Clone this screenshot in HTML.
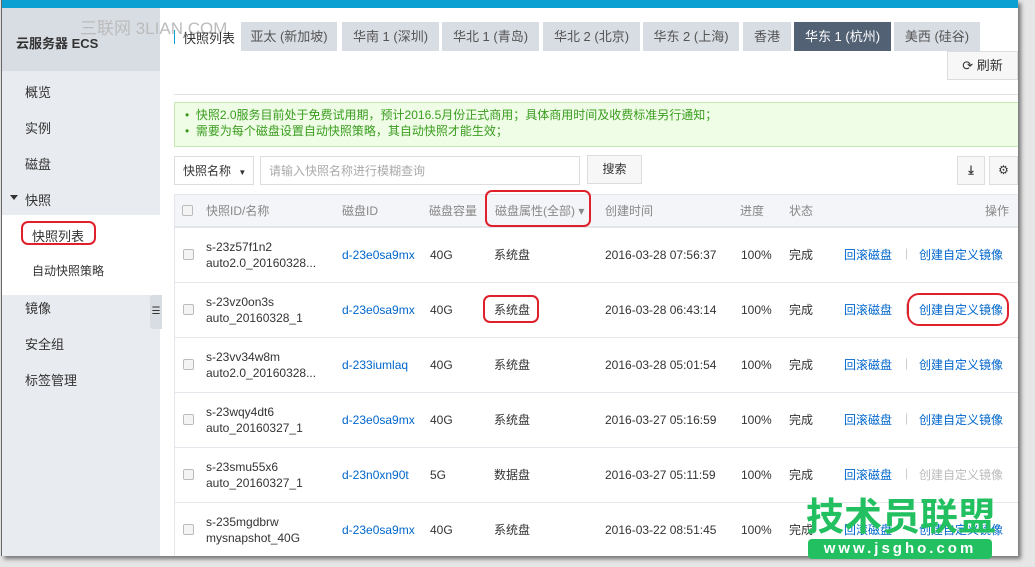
<!DOCTYPE html>
<html><head><meta charset="utf-8"><style>
*{margin:0;padding:0;box-sizing:border-box}
body{width:1035px;height:567px;overflow:hidden;background:#e6e6e6;font-family:"Liberation Sans","Noto Sans CJK SC",sans-serif;font-size:12px;color:#333;position:relative}
.frame{position:absolute;left:1px;top:0;width:1017px;height:556px;background:#fff;overflow:hidden;box-shadow:3px 3px 4px #777;border-left:1px solid #666}
.top{position:absolute;left:0;top:0;width:100%;height:8px;background:#0aa0d2}
.side{position:absolute;left:0;top:8px;width:158px;height:560px;background:#e8ebef}
.sh{height:63px;background:#d8dce3;font-weight:bold;font-size:13px;padding:25px 0 0 14px;color:#333}
.mi{position:absolute;left:23px;font-size:13px}
.abs{position:absolute}
.tab{position:absolute;top:22px;height:29px;background:#d8dce3;color:#555;font-size:13px;text-align:center;line-height:29px}
.red{position:absolute;border:2px solid #e0202a;border-radius:7px}
.th{position:absolute;top:203px;color:#888;font-size:12px;line-height:16px}
.r{position:absolute;left:172px;width:845px;height:55px;border-top:1px solid #e3e6ea}
.r span{position:absolute;top:0;line-height:16px;white-space:nowrap}
.blue{color:#06c}
.cb{position:absolute;width:11px;height:11px;border:1px solid #bbb;border-radius:2px;background:#f4f4f4}
</style></head><body>
<div class="frame">
<div class="top"></div>
<div class="side">
<div class="sh">云服务器 ECS</div>
<div class="mi" style="top:74px">概览</div>
<div class="mi" style="top:110px">实例</div>
<div class="mi" style="top:146px">磁盘</div>
<div class="mi" style="top:182px">快照</div>
<div class="abs" style="left:8px;top:187px;border:4px solid transparent;border-top:5px solid #333;border-bottom:0"></div>
<div class="abs" style="left:0;top:207px;width:158px;height:80px;background:#fff"></div>
<div class="mi" style="top:218px;left:30px">快照列表</div>
<div class="mi" style="top:254px;left:30px;font-size:12px">自动快照策略</div>
<div class="mi" style="top:290px">镜像</div>
<div class="mi" style="top:326px">安全组</div>
<div class="mi" style="top:362px">标签管理</div>
</div>
<div class="red" style="left:19px;top:221px;width:75px;height:24px"></div>
<div class="abs" style="left:148px;top:295px;width:12px;height:34px;background:#d8dce3;border-radius:3px 0 0 3px;font-size:10px;line-height:34px;text-align:center">☰</div>
<div class="abs" style="left:78px;top:14px;font-size:17px;color:#bbb">三联网 3LIAN.COM</div>
<div class="abs" style="left:172px;top:30px;width:1px;height:14px;background:#0aa0d2"></div>
<div class="abs" style="left:181px;top:28px;font-size:13px">快照列表</div>
<div class="tab" style="left:239px;width:96px">亚太 (新加坡)</div>
<div class="tab" style="left:340px;width:97px">华南 1 (深圳)</div>
<div class="tab" style="left:440px;width:97px">华北 1 (青岛)</div>
<div class="tab" style="left:541px;width:97px">华北 2 (北京)</div>
<div class="tab" style="left:641px;width:96px">华东 2 (上海)</div>
<div class="tab" style="left:741px;width:48px">香港</div>
<div class="tab" style="left:792px;width:97px;background:#536175;color:#fff">华东 1 (杭州)</div>
<div class="tab" style="left:892px;width:86px">美西 (硅谷)</div>
<div class="abs" style="left:945px;top:51px;width:71px;height:29px;border:1px solid #ddd;background:#f7f7f7;font-size:13px;line-height:27px;text-align:center">⟳ 刷新</div>
<div class="abs" style="left:172px;top:94px;width:845px;height:1px;background:#e3e3e3"></div>
<div class="abs" style="left:172px;top:102px;width:845px;height:45px;background:#effde6;border:1px solid #c7e7b4;color:#3a9c1f;font-size:12px;padding:4px 0 0 10px;line-height:16px">• &nbsp;快照2.0服务目前处于免费试用期，预计2016.5月份正式商用；具体商用时间及收费标准另行通知；<br>• &nbsp;需要为每个磁盘设置自动快照策略，其自动快照才能生效；</div>
<div class="abs" style="left:172px;top:156px;width:80px;height:29px;border:1px solid #ddd;padding:6px 8px;font-size:12px;white-space:nowrap;line-height:16px">快照名称 <span style="font-size:8px;margin-left:4px">▼</span></div>
<div class="abs" style="left:258px;top:156px;width:320px;height:29px;border:1px solid #ddd;padding:6px 8px;color:#aaa;line-height:16px">请输入快照名称进行模糊查询</div>
<div class="abs" style="left:585px;top:155px;width:55px;height:29px;border:1px solid #ddd;background:#f7f7f7;line-height:27px;text-align:center">搜索</div>
<div class="abs" style="left:955px;top:156px;width:28px;height:29px;border:1px solid #ddd;background:#f7f7f7;text-align:center;line-height:27px;font-weight:bold">⤓</div>
<div class="abs" style="left:987px;top:156px;width:29px;height:29px;border:1px solid #ddd;background:#f7f7f7;text-align:center;line-height:27px">⚙</div>
<div class="abs" style="left:172px;top:194px;width:845px;height:33px;background:#f4f5f8;border:1px solid #e3e6ea"></div>
<div class="cb" style="left:180px;top:205px"></div>
<div class="th" style="left:204px">快照ID/名称</div>
<div class="th" style="left:340px">磁盘ID</div>
<div class="th" style="left:427px">磁盘容量</div>
<div class="th" style="left:493px">磁盘属性(全部) ▾</div>
<div class="th" style="left:603px">创建时间</div>
<div class="th" style="left:738px">进度</div>
<div class="th" style="left:787px">状态</div>
<div class="th" style="left:983px">操作</div>
<div class="red" style="left:483px;top:190px;width:106px;height:37px"></div>
<div class="abs" style="left:172px;top:227px;width:845px;height:340px;border-left:1px solid #e3e6ea;border-right:1px solid #e3e6ea"></div>

<div class="r" style="top:227px"><div class="cb" style="left:9px;top:21px"></div><span style="left:32px;top:11px">s-23z57f1n2<br>auto2.0_20160328...</span><span class="blue" style="left:168px;top:19px">d-23e0sa9mx</span><span style="left:256px;top:19px">40G</span><span style="left:320px;top:19px">系统盘</span><span style="left:431px;top:19px">2016-03-28 07:56:37</span><span style="left:567px;top:19px">100%</span><span style="left:615px;top:19px">完成</span><span class="blue" style="left:670px;top:19px">回滚磁盘</span><span style="left:731px;top:17px;color:#ccc">|</span><span class="blue" style="left:745px;top:19px">创建自定义镜像</span></div>
<div class="r" style="top:282px"><div class="cb" style="left:9px;top:21px"></div><span style="left:32px;top:11px">s-23vz0on3s<br>auto_20160328_1</span><span class="blue" style="left:168px;top:19px">d-23e0sa9mx</span><span style="left:256px;top:19px">40G</span><span style="left:320px;top:19px">系统盘</span><span style="left:431px;top:19px">2016-03-28 06:43:14</span><span style="left:567px;top:19px">100%</span><span style="left:615px;top:19px">完成</span><span class="blue" style="left:670px;top:19px">回滚磁盘</span><span style="left:731px;top:17px;color:#ccc">|</span><span class="blue" style="left:745px;top:19px">创建自定义镜像</span></div>
<div class="r" style="top:337px"><div class="cb" style="left:9px;top:21px"></div><span style="left:32px;top:11px">s-23vv34w8m<br>auto2.0_20160328...</span><span class="blue" style="left:168px;top:19px">d-233iumlaq</span><span style="left:256px;top:19px">40G</span><span style="left:320px;top:19px">系统盘</span><span style="left:431px;top:19px">2016-03-28 05:01:54</span><span style="left:567px;top:19px">100%</span><span style="left:615px;top:19px">完成</span><span class="blue" style="left:670px;top:19px">回滚磁盘</span><span style="left:731px;top:17px;color:#ccc">|</span><span class="blue" style="left:745px;top:19px">创建自定义镜像</span></div>
<div class="r" style="top:392px"><div class="cb" style="left:9px;top:21px"></div><span style="left:32px;top:11px">s-23wqy4dt6<br>auto_20160327_1</span><span class="blue" style="left:168px;top:19px">d-23e0sa9mx</span><span style="left:256px;top:19px">40G</span><span style="left:320px;top:19px">系统盘</span><span style="left:431px;top:19px">2016-03-27 05:16:59</span><span style="left:567px;top:19px">100%</span><span style="left:615px;top:19px">完成</span><span class="blue" style="left:670px;top:19px">回滚磁盘</span><span style="left:731px;top:17px;color:#ccc">|</span><span class="blue" style="left:745px;top:19px">创建自定义镜像</span></div>
<div class="r" style="top:447px"><div class="cb" style="left:9px;top:21px"></div><span style="left:32px;top:11px">s-23smu55x6<br>auto_20160327_1</span><span class="blue" style="left:168px;top:19px">d-23n0xn90t</span><span style="left:256px;top:19px">5G</span><span style="left:320px;top:19px">数据盘</span><span style="left:431px;top:19px">2016-03-27 05:11:59</span><span style="left:567px;top:19px">100%</span><span style="left:615px;top:19px">完成</span><span class="blue" style="left:670px;top:19px">回滚磁盘</span><span style="left:731px;top:17px;color:#ccc">|</span><span style="left:745px;top:19px;color:#bbb">创建自定义镜像</span></div>
<div class="r" style="top:502px"><div class="cb" style="left:9px;top:21px"></div><span style="left:32px;top:11px">s-235mgdbrw<br>mysnapshot_40G</span><span class="blue" style="left:168px;top:19px">d-23e0sa9mx</span><span style="left:256px;top:19px">40G</span><span style="left:320px;top:19px">系统盘</span><span style="left:431px;top:19px">2016-03-22 08:51:45</span><span style="left:567px;top:19px">100%</span><span style="left:615px;top:19px">完成</span><span class="blue" style="left:670px;top:19px">回滚磁盘</span><span class="blue" style="left:745px;top:19px">创建自定义镜像</span></div>
<div class="red" style="left:481px;top:295px;width:56px;height:28px"></div>
<div class="red" style="left:905px;top:293px;width:102px;height:33px;border-radius:12px"></div>
</div>
<div class="abs" style="left:806px;top:496px;font-size:38px;font-weight:bold;color:#22c060;letter-spacing:0px;line-height:44px;white-space:nowrap">技术员联盟</div>
<div class="abs" style="left:808px;top:539px;width:184px;height:20px;background:#22c060;border-radius:4px;color:#fff;font-weight:bold;font-size:15px;text-align:center;line-height:20px;letter-spacing:3px">www.jsgho.com</div>
</body></html>
